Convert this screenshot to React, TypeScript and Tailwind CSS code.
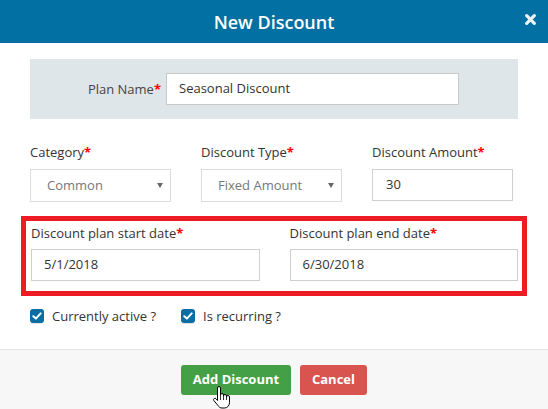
import React from "react";

const Star = () => <span className="text-[#ff0000] font-bold">*</span>;

const Arrow = () => (
  <svg width="6" height="5" viewBox="0 0 6 5" className="shrink-0">
    <path d="M0 0H6L3 5Z" fill="#666" />
  </svg>
);

const Check = () => (
  <span className="w-[14px] h-[14px] rounded-[3px] bg-[#0a6ea4] flex items-center justify-center shadow-[0_2px_1px_-1px_#e2e2e2]">
    <svg width="10" height="8" viewBox="0 0 10 8">
      <path d="M1.3 4.2 L3.9 6.6 L8.7 1.4" fill="none" stroke="#fff" strokeWidth="2" strokeLinecap="round" strokeLinejoin="round" />
    </svg>
  </span>
);

export default function App() {
  return (
    <div
      className="w-[548px] h-[409px] bg-white flex flex-col overflow-hidden relative text-[13px] text-[#333]"
      style={{ fontFamily: '"Open Sans", "Noto Sans", sans-serif' }}
    >
      <div className="h-[43px] bg-[#0270a2] flex items-center justify-center relative shrink-0">
        <span className="text-white text-[18px] font-semibold leading-none">New Discount</span>
        <svg
          width="11"
          height="11"
          viewBox="0 0 11 11"
          className="absolute right-[12px] top-[14px]"
        >
          <path d="M1.7 1.7 L9.3 9.3 M9.3 1.7 L1.7 9.3" stroke="#eef3f6" strokeWidth="3.2" strokeLinecap="round" />
        </svg>
      </div>

      <div className="flex-1 px-[30px] flex flex-col">
        <div className="mt-[16px] h-[60px] bg-[#dfe6e9] flex items-center">
          <div className="w-[136px] pr-[5px] text-right text-[#444] leading-[18px]">
            Plan Name<Star />
          </div>
          <div className="w-[293px] h-[32px] bg-white border border-[#c9c9c9] flex items-center px-[12px] text-[#333]">
            Seasonal Discount
          </div>
        </div>

        <div className="mt-[24px] grid grid-cols-[141px_141px_141px] gap-x-[30px]">
          <div className="flex flex-col gap-[8px]">
            <div className="leading-[18px]">
              Category<Star />
            </div>
            <div className="h-[33px] border border-[#dcdcdc] flex items-center justify-between pl-[16px] pr-[7px] text-[#777]">
              <span>Common</span>
              <Arrow />
            </div>
          </div>
          <div className="flex flex-col gap-[8px]">
            <div className="leading-[18px]">
              Discount Type<Star />
            </div>
            <div className="h-[33px] border border-[#dcdcdc] flex items-center justify-between pl-[16px] pr-[7px] text-[#777]">
              <span>Fixed Amount</span>
              <Arrow />
            </div>
          </div>
          <div className="flex flex-col gap-[8px]">
            <div className="leading-[18px]">
              Discount Amount<Star />
            </div>
            <div className="h-[32px] border border-[#cfcfcf] flex items-center px-[13px] text-[#333]">
              30
            </div>
          </div>
        </div>

        <div className="mt-[14px] -mx-[9px] border-[5px] border-[#ed1c24] pt-[3px] pb-[10px] pl-[5px] pr-[4px] grid grid-cols-2 gap-x-[30px]">
          <div className="flex flex-col gap-[7px]">
            <div className="leading-[18px]">
              Discount plan start date<Star />
            </div>
            <div className="h-[32px] border border-[#cfcfcf] flex items-center px-[12px]">5/1/2018</div>
          </div>
          <div className="flex flex-col gap-[7px]">
            <div className="leading-[18px]">
              Discount plan end date<Star />
            </div>
            <div className="h-[32px] border border-[#cfcfcf] flex items-center px-[12px]">6/30/2018</div>
          </div>
        </div>

        <div className="mt-[11px] flex items-center gap-[25px] h-[18px]">
          <div className="flex items-center gap-[8px]">
            <Check />
            <span className="leading-[18px]">Currently active ?</span>
          </div>
          <div className="flex items-center gap-[8px]">
            <Check />
            <span className="leading-[18px]">Is recurring ?</span>
          </div>
        </div>
      </div>

      <div className="h-[60px] shrink-0 bg-[#f7f7f7] border-t border-[#e3e3e3] flex justify-center items-start pt-[15px] gap-[9px]">
        <button className="h-[30px] w-[110px] rounded-[3px] bg-[#43a047] text-white font-bold text-[13px]">
          Add Discount
        </button>
        <button className="h-[30px] w-[67px] rounded-[3px] bg-[#d9534f] text-white font-bold text-[13px]">
          Cancel
        </button>
      </div>

      <svg
        width="19"
        height="23"
        viewBox="0 0 19 23"
        className="absolute left-[212px] top-[386px]"
      >
        <path
          d="M5.5 2 a1.5 1.5 0 0 1 3 0 V9 a1.5 1.5 0 0 1 3 0 V10 a1.5 1.5 0 0 1 3 0 V11 a1.5 1.5 0 0 1 3 0 V16.5 c0 3 -2 5.5 -5 5.5 H10 c-2 0 -3 -1 -4 -2.5 L1.8 14.5 a1.4 1.4 0 0 1 2.3 -1.6 L5.5 14.5 Z"
          fill="#fff"
          stroke="#000"
          strokeWidth="1"
          strokeLinejoin="round"
        />
        <path d="M8.5 9 V14 M11.5 10 V14 M14.5 11 V14" stroke="#000" strokeWidth="0.8" />
      </svg>
    </div>
  );
}
